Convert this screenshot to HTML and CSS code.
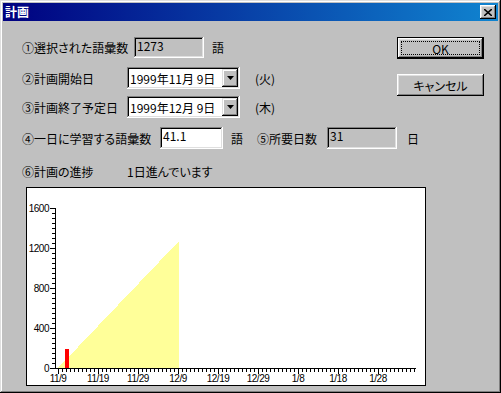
FILE: index.html
```html
<!DOCTYPE html>
<html>
<head>
    <title>計画</title>
    <link rel="stylesheet" href="styles.css">
</head>
<body>
    <div class="window">
        <div class="titlebar">
            <span class="title">計画</span>
            <span class="close">
                <svg width="8" height="7" viewBox="0 0 8 7"><path d="M0 0 L8 7 M8 0 L0 7" stroke="#000" stroke-width="1.6"/></svg>
            </span>
        </div>
        <div class="client">
            <div class="top">
                <div class="fields">
                    <div class="row r1">
                        <span class="label w112">①選択された語彙数</span>
                        <span class="box readonly w70">1273</span>
                        <span class="unit">語</span>
                    </div>
                    <div class="row r2">
                        <span class="label w105">②計画開始日</span>
                        <span class="combo"><span class="value">1999年11月 9日</span><span class="drop"><svg width="7" height="4"><polygon points="0,0 7,0 3.5,4"/></svg></span></span>
                        <span class="weekday">(火)</span>
                    </div>
                    <div class="row r3">
                        <span class="label w105">③計画終了予定日</span>
                        <span class="combo"><span class="value">1999年12月 9日</span><span class="drop"><svg width="7" height="4"><polygon points="0,0 7,0 3.5,4"/></svg></span></span>
                        <span class="weekday">(木)</span>
                    </div>
                </div>
                <div class="buttons">
                    <div class="btn default"><span class="focus">OK</span></div>
                    <div class="btn cancel">キャンセル</div>
                </div>
            </div>
            <div class="row r4">
                <span class="label w138">④一日に学習する語彙数</span>
                <span class="box w63">41.1</span>
                <span class="unit">語</span>
                <span class="label w70 gap">⑤所要日数</span>
                <span class="box readonly w70">31</span>
                <span class="unit u10">日</span>
            </div>
            <div class="row r5">
                <span class="label w105">⑥計画の進捗</span>
                <span>1日進んでいます</span>
            </div>
            <div class="chart">
                <svg class="plot" width="398" height="197">
                    <defs>
                        <pattern id="xt" x="31" y="0" width="4" height="10" patternUnits="userSpaceOnUse"><rect width="1" height="10"/></pattern>
                        <pattern id="yt" x="0" y="0" width="10" height="5" patternUnits="userSpaceOnUse"><rect width="10" height="1"/></pattern>
                    </defs>
                    <!-- 予定の語彙数 -->
                    <polygon points="31,180 152,180 152,53" fill="#ffff99"/>
                    <!-- 実績 -->
                    <rect x="38" y="161" width="4" height="19" fill="#ff0000"/>
                    <!-- 軸 -->
                    <rect x="28" y="20" width="1" height="161"/>
                    <rect x="28" y="180" width="361" height="1"/>
                    <rect x="25" y="20" width="3" height="161" fill="url(#yt)"/>
                    <rect x="31" y="181" width="358" height="3" fill="url(#xt)"/>
                    <g class="major">
                        <rect x="23" y="20" width="5" height="1"/>
                        <rect x="23" y="60" width="5" height="1"/>
                        <rect x="23" y="100" width="5" height="1"/>
                        <rect x="23" y="140" width="5" height="1"/>
                        <rect x="23" y="180" width="5" height="1"/>
                        <rect x="31" y="181" width="1" height="5"/>
                        <rect x="71" y="181" width="1" height="5"/>
                        <rect x="111" y="181" width="1" height="5"/>
                        <rect x="151" y="181" width="1" height="5"/>
                        <rect x="191" y="181" width="1" height="5"/>
                        <rect x="231" y="181" width="1" height="5"/>
                        <rect x="271" y="181" width="1" height="5"/>
                        <rect x="311" y="181" width="1" height="5"/>
                        <rect x="351" y="181" width="1" height="5"/>
                    </g>
                    <g class="ylabels">
                        <text x="22" y="24">1600</text>
                        <text x="22" y="64">1200</text>
                        <text x="22" y="104">800</text>
                        <text x="22" y="144">400</text>
                        <text x="22" y="184">0</text>
                    </g>
                    <g class="xlabels">
                        <text x="31" y="194">11/9</text>
                        <text x="71" y="194">11/19</text>
                        <text x="111" y="194">11/29</text>
                        <text x="151" y="194">12/9</text>
                        <text x="191" y="194">12/19</text>
                        <text x="231" y="194">12/29</text>
                        <text x="271" y="194">1/8</text>
                        <text x="311" y="194">1/18</text>
                        <text x="351" y="194">1/28</text>
                    </g>
                </svg>
            </div>
        </div>
    </div>
</body>
</html>
```

FILE: styles.css
```css
body {
    margin: 0;
    font-family: "Noto Sans CJK JP", sans-serif;
    font-size: 12px;
    font-feature-settings: "palt";
    background-color: #c0c0c0;
    color: #000;
}
.window {
    width: 501px;
    height: 393px;
    box-sizing: border-box;
    padding: 3px;
    background-color: #c0c0c0;
    box-shadow: inset -1px -1px #000, inset 1px 1px #dfdfdf, inset -2px -2px #808080, inset 2px 2px #fff;
}
.titlebar {
    height: 18px;
    display: flex;
    align-items: center;
    justify-content: space-between;
    padding: 0 2px 0 2px;
    background: linear-gradient(to right, #000080, #1084d0);
    color: white;
}
.title {
    font-weight: bold;
    line-height: 18px;
}
.close {
    width: 16px;
    height: 14px;
    box-sizing: border-box;
    display: flex;
    align-items: center;
    justify-content: center;
    background-color: #c0c0c0;
    box-shadow: inset -1px -1px #000, inset 1px 1px #fff, inset -2px -2px #808080, inset 2px 2px #dfdfdf;
}
.close svg {
    display: block;
}
.client {
    padding: 16px 0 0 19px;
}
.top {
    display: flex;
}
.fields {
    width: 375px;
}
.row {
    display: flex;
    align-items: center;
    height: 22px;
    white-space: nowrap;
}
.r1 {
    height: 21px;
}
.r2 {
    margin-top: 9px;
}
.r3 {
    margin-top: 7px;
}
.r4 {
    margin-top: 9px;
}
.r5 {
    margin-top: 14px;
    height: 16px;
}
.label {
    flex: none;
}
.w105 { width: 105px; }
.w112 { width: 112px; }
.w138 { width: 138px; }
.w70 { width: 70px; }
.w63 { width: 63px; }
.gap {
    margin-left: 14px;
}
.unit {
    margin-left: 8px;
}
.u10 {
    margin-left: 10px;
}
.box {
    box-sizing: border-box;
    height: 22px;
    padding: 2px 3px 0;
    line-height: 14px;
    background-color: white;
    box-shadow: inset -1px -1px #fff, inset 1px 1px #808080, inset -2px -2px #dfdfdf, inset 2px 2px #000;
}
.r1 .box {
    height: 21px;
}
.box.readonly {
    background-color: #c0c0c0;
}
.combo {
    box-sizing: border-box;
    width: 113px;
    height: 22px;
    display: flex;
    align-items: center;
    justify-content: space-between;
    padding: 2px;
    background-color: white;
    box-shadow: inset -1px -1px #fff, inset 1px 1px #808080, inset -2px -2px #dfdfdf, inset 2px 2px #000;
}
.combo .value {
    white-space: pre;
    padding-left: 1px;
}
.drop {
    width: 16px;
    height: 18px;
    box-sizing: border-box;
    display: flex;
    align-items: center;
    justify-content: center;
    background-color: #c0c0c0;
    box-shadow: inset -1px -1px #000, inset 1px 1px #dfdfdf, inset -2px -2px #808080, inset 2px 2px #fff;
}
.drop svg {
    display: block;
}
.weekday {
    margin-left: 15px;
}
.buttons {
    width: 87px;
    display: flex;
    flex-direction: column;
    gap: 15px;
}
.btn {
    box-sizing: border-box;
    height: 22px;
    display: flex;
    align-items: center;
    justify-content: center;
    background-color: #c0c0c0;
    box-shadow: inset -1px -1px #000, inset 1px 1px #fff, inset -2px -2px #808080, inset 2px 2px #dfdfdf;
}
.btn.default {
    border: 1px solid #000;
    padding: 3px;
}
.focus {
    flex: 1;
    align-self: stretch;
    display: flex;
    align-items: center;
    justify-content: center;
    border: 1px dotted #000;
}
.chart {
    margin: 8px 0 0 4px;
    width: 400px;
    height: 199px;
    box-sizing: border-box;
    border: 1px solid #000;
    background-color: white;
}
.plot {
    display: block;
    shape-rendering: crispEdges;
}
.plot text {
    font-family: "Liberation Sans", Arial, sans-serif;
    font-size: 10px;
    letter-spacing: -0.5px;
}
.ylabels text {
    text-anchor: end;
}
.xlabels text {
    text-anchor: middle;
}
```
